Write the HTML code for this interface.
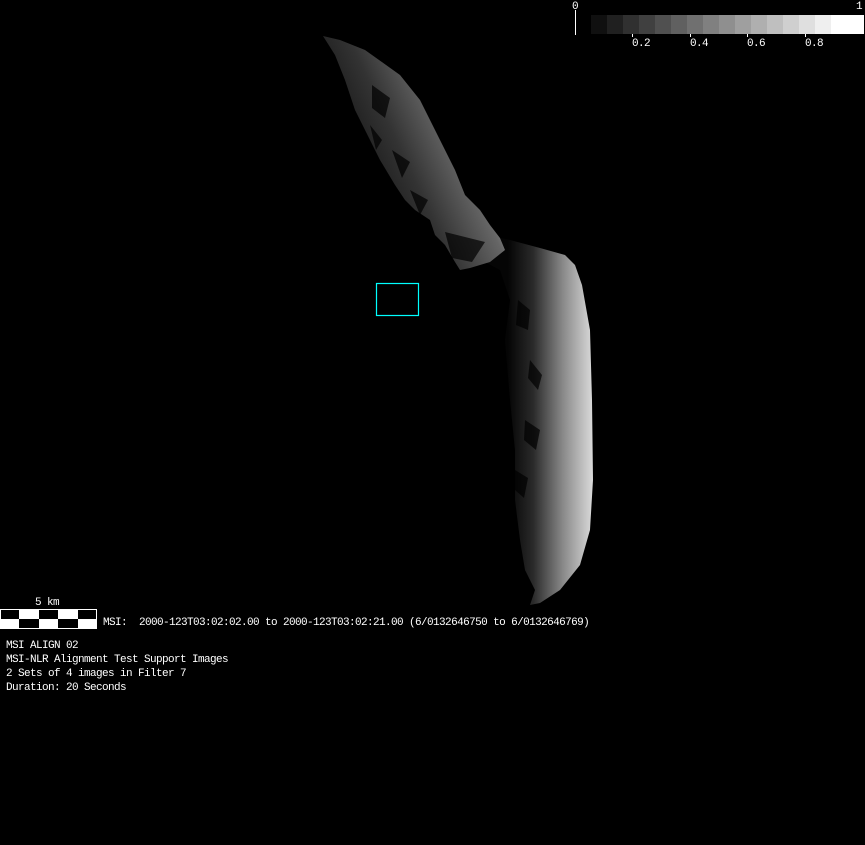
<!DOCTYPE html>
<html><head><meta charset="utf-8"><style>
html,body{margin:0;padding:0;background:#000;width:865px;height:845px;overflow:hidden}
.t{position:absolute;color:#fff;font-family:"Liberation Mono","DejaVu Sans Mono",monospace;font-size:11px;line-height:14px;white-space:pre;letter-spacing:-0.6px}
</style></head><body>
<svg width="865" height="845" style="position:absolute;left:0;top:0">
<defs>
<linearGradient id="g1" x1="508" y1="0" x2="592" y2="0" gradientUnits="userSpaceOnUse">
<stop offset="0" stop-color="#050505"/><stop offset="0.3" stop-color="#2a2a2a"/><stop offset="0.65" stop-color="#888"/><stop offset="1" stop-color="#d8d8d8"/></linearGradient>
<linearGradient id="g2" x1="340" y1="190" x2="470" y2="130" gradientUnits="userSpaceOnUse">
<stop offset="0" stop-color="#0a0a0a"/><stop offset="0.5" stop-color="#333"/><stop offset="0.85" stop-color="#666"/><stop offset="1" stop-color="#999"/></linearGradient>
</defs>
<polygon fill="url(#g1)" points="490,236 510,240 540,248 565,255 575,265 582,285 590,330 592,400 593,480 590,530 580,565 560,590 540,603 530,605 535,590 525,570 520,540 515,500 515,450 510,400 505,340 510,300 500,270 485,262 470,262"/>
<polygon fill="url(#g2)" points="323,36 340,40 365,50 400,75 420,100 440,140 455,170 465,195 480,210 490,225 500,238 505,250 490,262 470,268 460,270 455,262 445,245 435,235 430,220 415,210 405,200 395,185 380,160 370,140 355,110 345,80 335,55"/>
<g fill="#000" opacity="0.7">
<polygon points="518,300 530,310 528,330 516,325"/><polygon points="525,420 540,430 536,450 524,440"/><polygon points="530,360 542,375 538,390 528,378"/><polygon points="515,470 528,478 524,498 515,490"/>
<polygon points="372,85 390,98 385,118 372,108"/><polygon points="445,232 485,242 472,262 452,258"/><polygon points="392,150 410,162 402,178"/><polygon points="370,125 382,140 376,150"/><polygon points="410,190 428,200 420,215"/>
</g>
<rect x="376.5" y="283.5" width="42" height="32" fill="none" stroke="#00ffff" stroke-width="1.2"/>
<line x1="575.5" y1="10" x2="575.5" y2="35" stroke="#fff"/>
<g>
<rect x="591" y="15" width="16" height="19" fill="#101010"/><rect x="607" y="15" width="16" height="19" fill="#202020"/><rect x="623" y="15" width="16" height="19" fill="#303030"/><rect x="639" y="15" width="16" height="19" fill="#404040"/><rect x="655" y="15" width="16" height="19" fill="#505050"/><rect x="671" y="15" width="16" height="19" fill="#606060"/><rect x="687" y="15" width="16" height="19" fill="#707070"/><rect x="703" y="15" width="16" height="19" fill="#808080"/><rect x="719" y="15" width="16" height="19" fill="#8f8f8f"/><rect x="735" y="15" width="16" height="19" fill="#9f9f9f"/><rect x="751" y="15" width="16" height="19" fill="#afafaf"/><rect x="767" y="15" width="16" height="19" fill="#bfbfbf"/><rect x="783" y="15" width="16" height="19" fill="#cfcfcf"/><rect x="799" y="15" width="16" height="19" fill="#dfdfdf"/><rect x="815" y="15" width="16" height="19" fill="#efefef"/><rect x="831" y="15" width="33" height="19" fill="#fff"/>
</g>
<g stroke="#fff"><line x1="632.5" y1="34" x2="632.5" y2="37"/><line x1="690.5" y1="34" x2="690.5" y2="37"/><line x1="747.5" y1="34" x2="747.5" y2="37"/><line x1="805.5" y1="34" x2="805.5" y2="37"/></g>
<rect x="0.5" y="609.5" width="96" height="19" fill="#fff" stroke="#fff"/>
<g fill="#000">
<rect x="1" y="610" width="18" height="9"/><rect x="39" y="610" width="19" height="9"/><rect x="78" y="610" width="18" height="9"/>
<rect x="19" y="619" width="20" height="9"/><rect x="58" y="619" width="20" height="9"/>
</g>
</svg>
<div class="t" style="left:572px;top:0px">0</div>
<div class="t" style="left:856px;top:0px">1</div>
<div class="t" style="left:632px;top:37px">0.2</div>
<div class="t" style="left:690px;top:37px">0.4</div>
<div class="t" style="left:747px;top:37px">0.6</div>
<div class="t" style="left:805px;top:37px">0.8</div>
<div class="t" style="left:35px;top:596px">5 km</div>
<div class="t" style="left:103px;top:616px">MSI:  2000-123T03:02:02.00 to 2000-123T03:02:21.00 (6/0132646750 to 6/0132646769)</div>
<div class="t" style="left:6px;top:639px">MSI ALIGN 02
MSI-NLR Alignment Test Support Images
2 Sets of 4 images in Filter 7
Duration: 20 Seconds</div>
</body></html>
